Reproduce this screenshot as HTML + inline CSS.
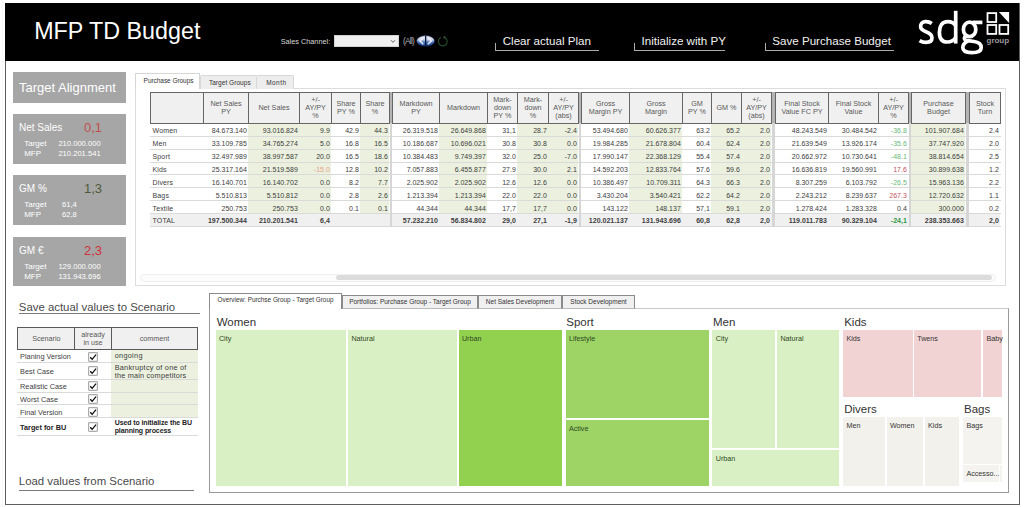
<!DOCTYPE html><html><head><meta charset="utf-8"><style>
*{box-sizing:border-box;margin:0;padding:0}
html,body{width:1024px;height:507px;overflow:hidden;background:#fff;font-family:"Liberation Sans",sans-serif;position:relative}
.a{position:absolute}
.t{white-space:nowrap}
</style></head><body>
<div class="a" style="left:2px;top:0px;width:1px;height:507px;background:#f7f7f7"></div>
<div class="a" style="left:5px;top:3px;width:1015px;height:502px;border:1px solid #5e5e5e;border-top:none"></div>
<div class="a" style="left:5px;top:3px;width:1014px;height:58px;background:#000"></div>
<div class="a t" style="left:34.20px;top:19.68px;font-size:23.3px;line-height:23.3px;color:#fff;">MFP TD Budget</div>
<div class="a t" style="left:280.70px;top:38.42px;font-size:7.3px;line-height:7.3px;color:#d8d8d8;letter-spacing:0px">Sales Channel:</div>
<div class="a" style="left:334px;top:35px;width:65px;height:12px;background:#efefef;border:1px solid #d0d0d0"></div>
<svg class="a" style="left:390px;top:39px" width="6" height="5" viewBox="0 0 6 5"><path d="M1 1.2 L3 3.4 L5 1.2" fill="none" stroke="#666" stroke-width="1"/></svg>
<div class="a t" style="left:403.00px;top:38.26px;font-size:8.2px;line-height:8.2px;color:#b0b0b0;letter-spacing:-0.7px">(All)</div>
<svg class="a" style="left:416px;top:35px" width="20" height="13" viewBox="0 0 20 13">
<defs><linearGradient id="bg1" x1="0" y1="0" x2="0" y2="1"><stop offset="0" stop-color="#f0eef4"/><stop offset="0.4" stop-color="#c8cfe2"/><stop offset="0.62" stop-color="#4a78c0"/><stop offset="1" stop-color="#1a3a80"/></linearGradient></defs>
<ellipse cx="9.6" cy="5.9" rx="9" ry="5.3" fill="url(#bg1)" stroke="#0d1f50" stroke-width="0.6"/>
<rect x="9" y="0.6" width="1.3" height="10.6" fill="#0a1840"/>
<path d="M7.3 2.6 L3.9 5.9 L7.3 9.2" fill="none" stroke="#f4f4fa" stroke-width="1.5" opacity="0.9"/>
<path d="M11.9 2.6 L15.3 5.9 L11.9 9.2" fill="none" stroke="#f4f4fa" stroke-width="1.5" opacity="0.9"/>
</svg>
<svg class="a" style="left:437px;top:35px" width="12" height="13" viewBox="0 0 12 13">
<path d="M7.6 2.5 A4.4 4.4 0 1 1 3.8 2.6" fill="none" stroke="#24502a" stroke-width="1.1"/>
<circle cx="7.4" cy="2.3" r="1" fill="#3a6a3a"/>
</svg>
<div class="a" style="left:495px;top:43px;width:104px;height:8px;border-left:1px solid #aaa;border-bottom:1px solid #aaa"></div>
<div class="a t" style="left:502.70px;top:34.78px;font-size:11.6px;line-height:11.6px;color:#f2f2f2;">Clear actual Plan</div>
<div class="a" style="left:634px;top:43px;width:91px;height:8px;border-left:1px solid #aaa;border-bottom:1px solid #aaa"></div>
<div class="a t" style="left:641.50px;top:34.78px;font-size:11.6px;line-height:11.6px;color:#f2f2f2;">Initialize with PY</div>
<div class="a" style="left:765px;top:43px;width:129px;height:8px;border-left:1px solid #aaa;border-bottom:1px solid #aaa"></div>
<div class="a t" style="left:772.30px;top:34.78px;font-size:11.6px;line-height:11.6px;color:#f2f2f2;">Save Purchase Budget</div>
<svg class="a" style="left:910px;top:5px" width="80" height="55" viewBox="910 5 80 55">
<g fill="none" stroke="#fff" stroke-width="3.7" stroke-linecap="butt">
<path d="M931.8 23.6 C929.5 21.9 926.5 21.6 925.2 21.7 C921.8 21.9 920.6 24.5 920.6 26.6 C920.6 29.6 923 30.7 926 31.8 C929.6 33.1 932 34.4 932 37.8 C932 41.2 929 42.4 926 42.4 C923.6 42.4 921.5 41.8 919.6 40.6"/>
<path d="M955.7 10.8 V43.6"/>
<path d="M955.7 25.8 C954 23 951.3 21.6 947.8 21.6 C942 21.6 939.4 26 939.4 32.2 C939.4 38.4 942 42 947.2 42 C951 42 953.8 40.4 955.7 37.4"/>
<ellipse cx="969.6" cy="29.4" rx="6.2" ry="7.3"/>
<path d="M972.6 22.4 H982.4"/>
<path d="M966.2 35.6 C963.8 37 963.6 39.6 966.6 40.4 L974 41.5 C979.6 42.3 981.2 44.4 981.2 47.4 C981.2 51.2 976.8 52.6 971.6 52.6 C966 52.6 962.8 51.2 962.8 47.6 C962.8 45 964.6 42.8 967.6 41.2"/>
</g></svg>
<svg class="a" style="left:986px;top:12px" width="24" height="24" viewBox="0 0 24 24">
<rect x="1.5" y="1.1" width="8.7" height="8.9" fill="none" stroke="#fff" stroke-width="1.8"/>
<path d="M12.9 0.1 L23.1 0.1 L23.1 10.9 Z" fill="#fff"/>
<rect x="1.5" y="13" width="8.7" height="8.9" fill="none" stroke="#fff" stroke-width="1.8"/>
<rect x="13.5" y="13" width="8.7" height="8.9" fill="none" stroke="#fff" stroke-width="1.8"/>
</svg>
<div class="a t" style="left:986.60px;top:37.03px;font-size:8px;line-height:8px;color:#9a9a9a;font-weight:bold;letter-spacing:-0.05px">group</div>
<div class="a" style="left:13px;top:72px;width:112.5px;height:31px;background:#a6a6a6"></div>
<div class="a t" style="left:19.00px;top:80.80px;font-size:13px;line-height:13px;color:#fff;">Target Alignment</div>
<div class="a" style="left:13px;top:114px;width:112.5px;height:50px;background:#a6a6a6"></div>
<div class="a t" style="left:19.00px;top:122.73px;font-size:10px;line-height:10px;color:#fff;">Net Sales</div>
<div class="a t" style="left:84.00px;top:121.00px;font-size:13px;line-height:13px;color:#c0504d;">0,1</div>
<div class="a t" style="left:24.20px;top:140.03px;font-size:8px;line-height:8px;color:#fff;">Target</div>
<div class="a t" style="left:58.40px;top:140.37px;font-size:7.6px;line-height:7.6px;color:#fff;">210.000.000</div>
<div class="a t" style="left:24.20px;top:150.03px;font-size:8px;line-height:8px;color:#fff;">MFP</div>
<div class="a t" style="left:58.40px;top:150.37px;font-size:7.6px;line-height:7.6px;color:#fff;">210.201.541</div>
<div class="a" style="left:13px;top:175px;width:112.5px;height:50px;background:#a6a6a6"></div>
<div class="a t" style="left:19.00px;top:183.73px;font-size:10px;line-height:10px;color:#fff;">GM %</div>
<div class="a t" style="left:84.00px;top:182.00px;font-size:13px;line-height:13px;color:#4f5a3c;">1,3</div>
<div class="a t" style="left:24.20px;top:201.03px;font-size:8px;line-height:8px;color:#fff;">Target</div>
<div class="a t" style="left:62.00px;top:201.37px;font-size:7.6px;line-height:7.6px;color:#fff;">61,4</div>
<div class="a t" style="left:24.20px;top:211.03px;font-size:8px;line-height:8px;color:#fff;">MFP</div>
<div class="a t" style="left:62.00px;top:211.37px;font-size:7.6px;line-height:7.6px;color:#fff;">62,8</div>
<div class="a" style="left:13px;top:237px;width:112.5px;height:49px;background:#a6a6a6"></div>
<div class="a t" style="left:19.00px;top:245.73px;font-size:10px;line-height:10px;color:#fff;">GM &euro;</div>
<div class="a t" style="left:84.00px;top:244.00px;font-size:13px;line-height:13px;color:#d0303a;">2,3</div>
<div class="a t" style="left:24.20px;top:263.03px;font-size:8px;line-height:8px;color:#fff;">Target</div>
<div class="a t" style="left:58.40px;top:263.37px;font-size:7.6px;line-height:7.6px;color:#fff;">129.000.000</div>
<div class="a t" style="left:24.20px;top:273.03px;font-size:8px;line-height:8px;color:#fff;">MFP</div>
<div class="a t" style="left:58.40px;top:273.37px;font-size:7.6px;line-height:7.6px;color:#fff;">131.943.696</div>
<div class="a" style="left:135px;top:88px;width:871px;height:198px;border:1px solid #dcdcdc"></div>
<div class="a" style="left:200px;top:75px;width:57px;height:14px;background:#ededed;border:1px solid #d8d8d8;border-bottom:none;border-radius:2px 2px 0 0"></div>
<div class="a" style="left:257px;top:75px;width:37px;height:14px;background:#ededed;border:1px solid #d8d8d8;border-bottom:none;border-left:none;border-radius:0 2px 0 0"></div>
<div class="a" style="left:135px;top:73px;width:65px;height:16px;background:#fff;border:1px solid #d6d6d6;border-bottom:none"></div>
<div class="a t" style="left:143.60px;top:78.30px;font-size:6.5px;line-height:6.5px;color:#333;letter-spacing:-0.05px">Purchase Groups</div>
<div class="a t" style="left:208.90px;top:79.90px;font-size:6.5px;line-height:6.5px;color:#333;letter-spacing:0.05px">Target Groups</div>
<div class="a t" style="left:266.20px;top:79.90px;font-size:6.5px;line-height:6.5px;color:#333;letter-spacing:0.45px">Month</div>
<div class="a" style="left:140px;top:273.5px;width:856px;height:8.0px;border:1px solid #f0f0f0;border-radius:4px;background:#fcfcfc"></div>
<div class="a" style="left:336px;top:275px;width:656px;height:5px;background:#dcdcdc;border-radius:2.5px"></div>
<div class="a" style="left:248px;top:123px;width:51px;height:90px;background:#ebf1de"></div>
<div class="a" style="left:299px;top:123px;width:32px;height:90px;background:#ebf1de"></div>
<div class="a" style="left:360px;top:123px;width:29px;height:90px;background:#ebf1de"></div>
<div class="a" style="left:439px;top:123px;width:48px;height:90px;background:#ebf1de"></div>
<div class="a" style="left:517px;top:123px;width:31px;height:90px;background:#ebf1de"></div>
<div class="a" style="left:548px;top:123px;width:30px;height:90px;background:#ebf1de"></div>
<div class="a" style="left:629px;top:123px;width:53px;height:90px;background:#ebf1de"></div>
<div class="a" style="left:711px;top:123px;width:30px;height:90px;background:#ebf1de"></div>
<div class="a" style="left:741px;top:123px;width:30px;height:90px;background:#ebf1de"></div>
<div class="a" style="left:911px;top:123px;width:54px;height:90px;background:#ebf1de"></div>
<div class="a" style="left:150px;top:213px;width:850px;height:13.5px;background:#f0f0f0"></div>
<div class="a" style="left:389px;top:92px;width:4px;height:31px;background:#b4b4b4"></div>
<div class="a" style="left:390px;top:123px;width:2px;height:103.5px;background:#d6d6d6"></div>
<div class="a" style="left:578px;top:92px;width:4px;height:31px;background:#b4b4b4"></div>
<div class="a" style="left:579px;top:123px;width:2px;height:103.5px;background:#d6d6d6"></div>
<div class="a" style="left:771px;top:92px;width:5px;height:31px;background:#b4b4b4"></div>
<div class="a" style="left:772px;top:123px;width:3px;height:103.5px;background:#d6d6d6"></div>
<div class="a" style="left:908px;top:92px;width:4px;height:31px;background:#b4b4b4"></div>
<div class="a" style="left:909px;top:123px;width:2px;height:103.5px;background:#d6d6d6"></div>
<div class="a" style="left:965px;top:92px;width:5px;height:31px;background:#b4b4b4"></div>
<div class="a" style="left:966px;top:123px;width:3px;height:103.5px;background:#d6d6d6"></div>
<div class="a" style="left:150px;top:135.5px;width:240px;height:1.0px;background:#dadada"></div>
<div class="a" style="left:392px;top:135.5px;width:187px;height:1.0px;background:#dadada"></div>
<div class="a" style="left:581px;top:135.5px;width:191px;height:1.0px;background:#dadada"></div>
<div class="a" style="left:775px;top:135.5px;width:134px;height:1.0px;background:#dadada"></div>
<div class="a" style="left:911px;top:135.5px;width:55px;height:1.0px;background:#dadada"></div>
<div class="a" style="left:969px;top:135.5px;width:32px;height:1.0px;background:#dadada"></div>
<div class="a" style="left:150px;top:148.5px;width:240px;height:1.0px;background:#dadada"></div>
<div class="a" style="left:392px;top:148.5px;width:187px;height:1.0px;background:#dadada"></div>
<div class="a" style="left:581px;top:148.5px;width:191px;height:1.0px;background:#dadada"></div>
<div class="a" style="left:775px;top:148.5px;width:134px;height:1.0px;background:#dadada"></div>
<div class="a" style="left:911px;top:148.5px;width:55px;height:1.0px;background:#dadada"></div>
<div class="a" style="left:969px;top:148.5px;width:32px;height:1.0px;background:#dadada"></div>
<div class="a" style="left:150px;top:161.5px;width:240px;height:1.0px;background:#dadada"></div>
<div class="a" style="left:392px;top:161.5px;width:187px;height:1.0px;background:#dadada"></div>
<div class="a" style="left:581px;top:161.5px;width:191px;height:1.0px;background:#dadada"></div>
<div class="a" style="left:775px;top:161.5px;width:134px;height:1.0px;background:#dadada"></div>
<div class="a" style="left:911px;top:161.5px;width:55px;height:1.0px;background:#dadada"></div>
<div class="a" style="left:969px;top:161.5px;width:32px;height:1.0px;background:#dadada"></div>
<div class="a" style="left:150px;top:174.0px;width:240px;height:1.0px;background:#dadada"></div>
<div class="a" style="left:392px;top:174.0px;width:187px;height:1.0px;background:#dadada"></div>
<div class="a" style="left:581px;top:174.0px;width:191px;height:1.0px;background:#dadada"></div>
<div class="a" style="left:775px;top:174.0px;width:134px;height:1.0px;background:#dadada"></div>
<div class="a" style="left:911px;top:174.0px;width:55px;height:1.0px;background:#dadada"></div>
<div class="a" style="left:969px;top:174.0px;width:32px;height:1.0px;background:#dadada"></div>
<div class="a" style="left:150px;top:187.0px;width:240px;height:1.0px;background:#dadada"></div>
<div class="a" style="left:392px;top:187.0px;width:187px;height:1.0px;background:#dadada"></div>
<div class="a" style="left:581px;top:187.0px;width:191px;height:1.0px;background:#dadada"></div>
<div class="a" style="left:775px;top:187.0px;width:134px;height:1.0px;background:#dadada"></div>
<div class="a" style="left:911px;top:187.0px;width:55px;height:1.0px;background:#dadada"></div>
<div class="a" style="left:969px;top:187.0px;width:32px;height:1.0px;background:#dadada"></div>
<div class="a" style="left:150px;top:200.0px;width:240px;height:1.0px;background:#dadada"></div>
<div class="a" style="left:392px;top:200.0px;width:187px;height:1.0px;background:#dadada"></div>
<div class="a" style="left:581px;top:200.0px;width:191px;height:1.0px;background:#dadada"></div>
<div class="a" style="left:775px;top:200.0px;width:134px;height:1.0px;background:#dadada"></div>
<div class="a" style="left:911px;top:200.0px;width:55px;height:1.0px;background:#dadada"></div>
<div class="a" style="left:969px;top:200.0px;width:32px;height:1.0px;background:#dadada"></div>
<div class="a" style="left:150px;top:212.5px;width:240px;height:1.0px;background:#dadada"></div>
<div class="a" style="left:392px;top:212.5px;width:187px;height:1.0px;background:#dadada"></div>
<div class="a" style="left:581px;top:212.5px;width:191px;height:1.0px;background:#dadada"></div>
<div class="a" style="left:775px;top:212.5px;width:134px;height:1.0px;background:#dadada"></div>
<div class="a" style="left:911px;top:212.5px;width:55px;height:1.0px;background:#dadada"></div>
<div class="a" style="left:969px;top:212.5px;width:32px;height:1.0px;background:#dadada"></div>
<div class="a" style="left:150px;top:226.0px;width:240px;height:1.0px;background:#dadada"></div>
<div class="a" style="left:392px;top:226.0px;width:187px;height:1.0px;background:#dadada"></div>
<div class="a" style="left:581px;top:226.0px;width:191px;height:1.0px;background:#dadada"></div>
<div class="a" style="left:775px;top:226.0px;width:134px;height:1.0px;background:#dadada"></div>
<div class="a" style="left:911px;top:226.0px;width:55px;height:1.0px;background:#dadada"></div>
<div class="a" style="left:969px;top:226.0px;width:32px;height:1.0px;background:#dadada"></div>
<div class="a" style="left:150px;top:92px;width:240px;height:32px;background:#f0f0f0;border:1px solid #666"></div>
<div class="a" style="left:203px;top:92px;width:1px;height:32px;background:#666"></div>
<div class="a" style="left:248px;top:92px;width:1px;height:32px;background:#666"></div>
<div class="a" style="left:299px;top:92px;width:1px;height:32px;background:#666"></div>
<div class="a" style="left:331px;top:92px;width:1px;height:32px;background:#666"></div>
<div class="a" style="left:360px;top:92px;width:1px;height:32px;background:#666"></div>
<div class="a" style="left:203px;top:99.80px;width:46px;text-align:center;font-size:7.2px;line-height:8.2px;color:#595959">Net Sales<br>PY</div>
<div class="a" style="left:248px;top:103.90px;width:52px;text-align:center;font-size:7.2px;line-height:8.2px;color:#595959">Net Sales</div>
<div class="a" style="left:299px;top:95.70px;width:33px;text-align:center;font-size:7.2px;line-height:8.2px;color:#595959">+/-<br>AY/PY<br>%</div>
<div class="a" style="left:331px;top:99.80px;width:30px;text-align:center;font-size:7.2px;line-height:8.2px;color:#595959">Share<br>PY %</div>
<div class="a" style="left:360px;top:99.80px;width:30px;text-align:center;font-size:7.2px;line-height:8.2px;color:#595959">Share<br>%</div>
<div class="a" style="left:392px;top:92px;width:187px;height:32px;background:#f0f0f0;border:1px solid #666"></div>
<div class="a" style="left:439px;top:92px;width:1px;height:32px;background:#666"></div>
<div class="a" style="left:487px;top:92px;width:1px;height:32px;background:#666"></div>
<div class="a" style="left:517px;top:92px;width:1px;height:32px;background:#666"></div>
<div class="a" style="left:548px;top:92px;width:1px;height:32px;background:#666"></div>
<div class="a" style="left:392px;top:99.80px;width:48px;text-align:center;font-size:7.2px;line-height:8.2px;color:#595959">Markdown<br>PY</div>
<div class="a" style="left:439px;top:103.90px;width:49px;text-align:center;font-size:7.2px;line-height:8.2px;color:#595959">Markdown</div>
<div class="a" style="left:487px;top:95.70px;width:31px;text-align:center;font-size:7.2px;line-height:8.2px;color:#595959">Mark-<br>down<br>PY %</div>
<div class="a" style="left:517px;top:95.70px;width:32px;text-align:center;font-size:7.2px;line-height:8.2px;color:#595959">Mark-<br>down<br>%</div>
<div class="a" style="left:548px;top:95.70px;width:31px;text-align:center;font-size:7.2px;line-height:8.2px;color:#595959">+/-<br>AY/PY<br>(abs)</div>
<div class="a" style="left:581px;top:92px;width:191px;height:32px;background:#f0f0f0;border:1px solid #666"></div>
<div class="a" style="left:629px;top:92px;width:1px;height:32px;background:#666"></div>
<div class="a" style="left:682px;top:92px;width:1px;height:32px;background:#666"></div>
<div class="a" style="left:711px;top:92px;width:1px;height:32px;background:#666"></div>
<div class="a" style="left:741px;top:92px;width:1px;height:32px;background:#666"></div>
<div class="a" style="left:581px;top:99.80px;width:49px;text-align:center;font-size:7.2px;line-height:8.2px;color:#595959">Gross<br>Margin PY</div>
<div class="a" style="left:629px;top:99.80px;width:54px;text-align:center;font-size:7.2px;line-height:8.2px;color:#595959">Gross<br>Margin</div>
<div class="a" style="left:682px;top:99.80px;width:30px;text-align:center;font-size:7.2px;line-height:8.2px;color:#595959">GM<br>PY %</div>
<div class="a" style="left:711px;top:103.90px;width:31px;text-align:center;font-size:7.2px;line-height:8.2px;color:#595959">GM %</div>
<div class="a" style="left:741px;top:95.70px;width:31px;text-align:center;font-size:7.2px;line-height:8.2px;color:#595959">+/-<br>AY/PY<br>(abs)</div>
<div class="a" style="left:775px;top:92px;width:134px;height:32px;background:#f0f0f0;border:1px solid #666"></div>
<div class="a" style="left:828px;top:92px;width:1px;height:32px;background:#666"></div>
<div class="a" style="left:878px;top:92px;width:1px;height:32px;background:#666"></div>
<div class="a" style="left:775px;top:99.80px;width:54px;text-align:center;font-size:7.2px;line-height:8.2px;color:#595959">Final Stock<br>Value FC PY</div>
<div class="a" style="left:828px;top:99.80px;width:51px;text-align:center;font-size:7.2px;line-height:8.2px;color:#595959">Final Stock<br>Value</div>
<div class="a" style="left:878px;top:95.70px;width:31px;text-align:center;font-size:7.2px;line-height:8.2px;color:#595959">+/-<br>AY/PY<br>%</div>
<div class="a" style="left:911px;top:92px;width:55px;height:32px;background:#f0f0f0;border:1px solid #666"></div>
<div class="a" style="left:911px;top:99.80px;width:55px;text-align:center;font-size:7.2px;line-height:8.2px;color:#595959">Purchase<br>Budget</div>
<div class="a" style="left:969px;top:92px;width:32px;height:32px;background:#f0f0f0;border:1px solid #666"></div>
<div class="a" style="left:969px;top:99.80px;width:32px;text-align:center;font-size:7.2px;line-height:8.2px;color:#595959">Stock<br>Turn</div>
<div class="a t" style="left:152.50px;top:127.47px;font-size:7px;line-height:7px;color:#404040;letter-spacing:0.15px">Women</div>
<div class="a t" style="left:-53.20px;width:300px;text-align:right;top:127.47px;font-size:7px;line-height:7px;color:#404040;">84.673.140</div>
<div class="a t" style="left:-2.20px;width:300px;text-align:right;top:127.47px;font-size:7px;line-height:7px;color:#404040;">93.016.824</div>
<div class="a t" style="left:29.80px;width:300px;text-align:right;top:127.47px;font-size:7px;line-height:7px;color:#404040;">9.9</div>
<div class="a t" style="left:58.80px;width:300px;text-align:right;top:127.47px;font-size:7px;line-height:7px;color:#404040;">42.9</div>
<div class="a t" style="left:87.80px;width:300px;text-align:right;top:127.47px;font-size:7px;line-height:7px;color:#404040;">44.3</div>
<div class="a t" style="left:137.80px;width:300px;text-align:right;top:127.47px;font-size:7px;line-height:7px;color:#404040;">26.319.518</div>
<div class="a t" style="left:185.80px;width:300px;text-align:right;top:127.47px;font-size:7px;line-height:7px;color:#404040;">26.649.868</div>
<div class="a t" style="left:215.80px;width:300px;text-align:right;top:127.47px;font-size:7px;line-height:7px;color:#404040;">31,1</div>
<div class="a t" style="left:246.80px;width:300px;text-align:right;top:127.47px;font-size:7px;line-height:7px;color:#404040;">28.7</div>
<div class="a t" style="left:276.80px;width:300px;text-align:right;top:127.47px;font-size:7px;line-height:7px;color:#404040;">-2.4</div>
<div class="a t" style="left:327.80px;width:300px;text-align:right;top:127.47px;font-size:7px;line-height:7px;color:#404040;">53.494.680</div>
<div class="a t" style="left:380.80px;width:300px;text-align:right;top:127.47px;font-size:7px;line-height:7px;color:#404040;">60.626.377</div>
<div class="a t" style="left:409.80px;width:300px;text-align:right;top:127.47px;font-size:7px;line-height:7px;color:#404040;">63.2</div>
<div class="a t" style="left:439.80px;width:300px;text-align:right;top:127.47px;font-size:7px;line-height:7px;color:#404040;">65.2</div>
<div class="a t" style="left:469.80px;width:300px;text-align:right;top:127.47px;font-size:7px;line-height:7px;color:#404040;">2.0</div>
<div class="a t" style="left:526.80px;width:300px;text-align:right;top:127.47px;font-size:7px;line-height:7px;color:#404040;">48.243.549</div>
<div class="a t" style="left:576.80px;width:300px;text-align:right;top:127.47px;font-size:7px;line-height:7px;color:#404040;">30.484.542</div>
<div class="a t" style="left:606.80px;width:300px;text-align:right;top:127.47px;font-size:7px;line-height:7px;color:#6cb87c;">-36.8</div>
<div class="a t" style="left:663.80px;width:300px;text-align:right;top:127.47px;font-size:7px;line-height:7px;color:#404040;">101.907.684</div>
<div class="a t" style="left:698.80px;width:300px;text-align:right;top:127.47px;font-size:7px;line-height:7px;color:#404040;">2.4</div>
<div class="a t" style="left:152.50px;top:140.47px;font-size:7px;line-height:7px;color:#404040;letter-spacing:0.15px">Men</div>
<div class="a t" style="left:-53.20px;width:300px;text-align:right;top:140.47px;font-size:7px;line-height:7px;color:#404040;">33.109.785</div>
<div class="a t" style="left:-2.20px;width:300px;text-align:right;top:140.47px;font-size:7px;line-height:7px;color:#404040;">34.765.274</div>
<div class="a t" style="left:29.80px;width:300px;text-align:right;top:140.47px;font-size:7px;line-height:7px;color:#404040;">5.0</div>
<div class="a t" style="left:58.80px;width:300px;text-align:right;top:140.47px;font-size:7px;line-height:7px;color:#404040;">16.8</div>
<div class="a t" style="left:87.80px;width:300px;text-align:right;top:140.47px;font-size:7px;line-height:7px;color:#404040;">16.5</div>
<div class="a t" style="left:137.80px;width:300px;text-align:right;top:140.47px;font-size:7px;line-height:7px;color:#404040;">10.186.687</div>
<div class="a t" style="left:185.80px;width:300px;text-align:right;top:140.47px;font-size:7px;line-height:7px;color:#404040;">10.696.021</div>
<div class="a t" style="left:215.80px;width:300px;text-align:right;top:140.47px;font-size:7px;line-height:7px;color:#404040;">30.8</div>
<div class="a t" style="left:246.80px;width:300px;text-align:right;top:140.47px;font-size:7px;line-height:7px;color:#404040;">30.8</div>
<div class="a t" style="left:276.80px;width:300px;text-align:right;top:140.47px;font-size:7px;line-height:7px;color:#404040;">0.0</div>
<div class="a t" style="left:327.80px;width:300px;text-align:right;top:140.47px;font-size:7px;line-height:7px;color:#404040;">19.984.285</div>
<div class="a t" style="left:380.80px;width:300px;text-align:right;top:140.47px;font-size:7px;line-height:7px;color:#404040;">21.678.804</div>
<div class="a t" style="left:409.80px;width:300px;text-align:right;top:140.47px;font-size:7px;line-height:7px;color:#404040;">60.4</div>
<div class="a t" style="left:439.80px;width:300px;text-align:right;top:140.47px;font-size:7px;line-height:7px;color:#404040;">62.4</div>
<div class="a t" style="left:469.80px;width:300px;text-align:right;top:140.47px;font-size:7px;line-height:7px;color:#404040;">2.0</div>
<div class="a t" style="left:526.80px;width:300px;text-align:right;top:140.47px;font-size:7px;line-height:7px;color:#404040;">21.639.549</div>
<div class="a t" style="left:576.80px;width:300px;text-align:right;top:140.47px;font-size:7px;line-height:7px;color:#404040;">13.926.174</div>
<div class="a t" style="left:606.80px;width:300px;text-align:right;top:140.47px;font-size:7px;line-height:7px;color:#6cb87c;">-35.6</div>
<div class="a t" style="left:663.80px;width:300px;text-align:right;top:140.47px;font-size:7px;line-height:7px;color:#404040;">37.747.920</div>
<div class="a t" style="left:698.80px;width:300px;text-align:right;top:140.47px;font-size:7px;line-height:7px;color:#404040;">2.0</div>
<div class="a t" style="left:152.50px;top:153.47px;font-size:7px;line-height:7px;color:#404040;letter-spacing:0.15px">Sport</div>
<div class="a t" style="left:-53.20px;width:300px;text-align:right;top:153.47px;font-size:7px;line-height:7px;color:#404040;">32.497.989</div>
<div class="a t" style="left:-2.20px;width:300px;text-align:right;top:153.47px;font-size:7px;line-height:7px;color:#404040;">38.997.587</div>
<div class="a t" style="left:29.80px;width:300px;text-align:right;top:153.47px;font-size:7px;line-height:7px;color:#404040;">20.0</div>
<div class="a t" style="left:58.80px;width:300px;text-align:right;top:153.47px;font-size:7px;line-height:7px;color:#404040;">16.5</div>
<div class="a t" style="left:87.80px;width:300px;text-align:right;top:153.47px;font-size:7px;line-height:7px;color:#404040;">18.6</div>
<div class="a t" style="left:137.80px;width:300px;text-align:right;top:153.47px;font-size:7px;line-height:7px;color:#404040;">10.384.483</div>
<div class="a t" style="left:185.80px;width:300px;text-align:right;top:153.47px;font-size:7px;line-height:7px;color:#404040;">9.749.397</div>
<div class="a t" style="left:215.80px;width:300px;text-align:right;top:153.47px;font-size:7px;line-height:7px;color:#404040;">32.0</div>
<div class="a t" style="left:246.80px;width:300px;text-align:right;top:153.47px;font-size:7px;line-height:7px;color:#404040;">25.0</div>
<div class="a t" style="left:276.80px;width:300px;text-align:right;top:153.47px;font-size:7px;line-height:7px;color:#404040;">-7.0</div>
<div class="a t" style="left:327.80px;width:300px;text-align:right;top:153.47px;font-size:7px;line-height:7px;color:#404040;">17.990.147</div>
<div class="a t" style="left:380.80px;width:300px;text-align:right;top:153.47px;font-size:7px;line-height:7px;color:#404040;">22.368.129</div>
<div class="a t" style="left:409.80px;width:300px;text-align:right;top:153.47px;font-size:7px;line-height:7px;color:#404040;">55.4</div>
<div class="a t" style="left:439.80px;width:300px;text-align:right;top:153.47px;font-size:7px;line-height:7px;color:#404040;">57.4</div>
<div class="a t" style="left:469.80px;width:300px;text-align:right;top:153.47px;font-size:7px;line-height:7px;color:#404040;">2.0</div>
<div class="a t" style="left:526.80px;width:300px;text-align:right;top:153.47px;font-size:7px;line-height:7px;color:#404040;">20.662.972</div>
<div class="a t" style="left:576.80px;width:300px;text-align:right;top:153.47px;font-size:7px;line-height:7px;color:#404040;">10.730.641</div>
<div class="a t" style="left:606.80px;width:300px;text-align:right;top:153.47px;font-size:7px;line-height:7px;color:#6cb87c;">-48.1</div>
<div class="a t" style="left:663.80px;width:300px;text-align:right;top:153.47px;font-size:7px;line-height:7px;color:#404040;">38.814.654</div>
<div class="a t" style="left:698.80px;width:300px;text-align:right;top:153.47px;font-size:7px;line-height:7px;color:#404040;">2.5</div>
<div class="a t" style="left:152.50px;top:166.47px;font-size:7px;line-height:7px;color:#404040;letter-spacing:0.15px">Kids</div>
<div class="a t" style="left:-53.20px;width:300px;text-align:right;top:166.47px;font-size:7px;line-height:7px;color:#404040;">25.317.164</div>
<div class="a t" style="left:-2.20px;width:300px;text-align:right;top:166.47px;font-size:7px;line-height:7px;color:#404040;">21.519.589</div>
<div class="a t" style="left:29.80px;width:300px;text-align:right;top:166.47px;font-size:7px;line-height:7px;color:#e8a08a;">-15.0</div>
<div class="a t" style="left:58.80px;width:300px;text-align:right;top:166.47px;font-size:7px;line-height:7px;color:#404040;">12.8</div>
<div class="a t" style="left:87.80px;width:300px;text-align:right;top:166.47px;font-size:7px;line-height:7px;color:#404040;">10.2</div>
<div class="a t" style="left:137.80px;width:300px;text-align:right;top:166.47px;font-size:7px;line-height:7px;color:#404040;">7.057.883</div>
<div class="a t" style="left:185.80px;width:300px;text-align:right;top:166.47px;font-size:7px;line-height:7px;color:#404040;">6.455.877</div>
<div class="a t" style="left:215.80px;width:300px;text-align:right;top:166.47px;font-size:7px;line-height:7px;color:#404040;">27.9</div>
<div class="a t" style="left:246.80px;width:300px;text-align:right;top:166.47px;font-size:7px;line-height:7px;color:#404040;">30.0</div>
<div class="a t" style="left:276.80px;width:300px;text-align:right;top:166.47px;font-size:7px;line-height:7px;color:#404040;">2.1</div>
<div class="a t" style="left:327.80px;width:300px;text-align:right;top:166.47px;font-size:7px;line-height:7px;color:#404040;">14.592.203</div>
<div class="a t" style="left:380.80px;width:300px;text-align:right;top:166.47px;font-size:7px;line-height:7px;color:#404040;">12.833.764</div>
<div class="a t" style="left:409.80px;width:300px;text-align:right;top:166.47px;font-size:7px;line-height:7px;color:#404040;">57.6</div>
<div class="a t" style="left:439.80px;width:300px;text-align:right;top:166.47px;font-size:7px;line-height:7px;color:#404040;">59.6</div>
<div class="a t" style="left:469.80px;width:300px;text-align:right;top:166.47px;font-size:7px;line-height:7px;color:#404040;">2.0</div>
<div class="a t" style="left:526.80px;width:300px;text-align:right;top:166.47px;font-size:7px;line-height:7px;color:#404040;">16.636.819</div>
<div class="a t" style="left:576.80px;width:300px;text-align:right;top:166.47px;font-size:7px;line-height:7px;color:#404040;">19.560.991</div>
<div class="a t" style="left:606.80px;width:300px;text-align:right;top:166.47px;font-size:7px;line-height:7px;color:#c4505c;">17.6</div>
<div class="a t" style="left:663.80px;width:300px;text-align:right;top:166.47px;font-size:7px;line-height:7px;color:#404040;">30.899.638</div>
<div class="a t" style="left:698.80px;width:300px;text-align:right;top:166.47px;font-size:7px;line-height:7px;color:#404040;">1.2</div>
<div class="a t" style="left:152.50px;top:178.97px;font-size:7px;line-height:7px;color:#404040;letter-spacing:0.15px">Divers</div>
<div class="a t" style="left:-53.20px;width:300px;text-align:right;top:178.97px;font-size:7px;line-height:7px;color:#404040;">16.140.701</div>
<div class="a t" style="left:-2.20px;width:300px;text-align:right;top:178.97px;font-size:7px;line-height:7px;color:#404040;">16.140.702</div>
<div class="a t" style="left:29.80px;width:300px;text-align:right;top:178.97px;font-size:7px;line-height:7px;color:#404040;">0.0</div>
<div class="a t" style="left:58.80px;width:300px;text-align:right;top:178.97px;font-size:7px;line-height:7px;color:#404040;">8.2</div>
<div class="a t" style="left:87.80px;width:300px;text-align:right;top:178.97px;font-size:7px;line-height:7px;color:#404040;">7.7</div>
<div class="a t" style="left:137.80px;width:300px;text-align:right;top:178.97px;font-size:7px;line-height:7px;color:#404040;">2.025.902</div>
<div class="a t" style="left:185.80px;width:300px;text-align:right;top:178.97px;font-size:7px;line-height:7px;color:#404040;">2.025.902</div>
<div class="a t" style="left:215.80px;width:300px;text-align:right;top:178.97px;font-size:7px;line-height:7px;color:#404040;">12.6</div>
<div class="a t" style="left:246.80px;width:300px;text-align:right;top:178.97px;font-size:7px;line-height:7px;color:#404040;">12.6</div>
<div class="a t" style="left:276.80px;width:300px;text-align:right;top:178.97px;font-size:7px;line-height:7px;color:#404040;">0.0</div>
<div class="a t" style="left:327.80px;width:300px;text-align:right;top:178.97px;font-size:7px;line-height:7px;color:#404040;">10.386.497</div>
<div class="a t" style="left:380.80px;width:300px;text-align:right;top:178.97px;font-size:7px;line-height:7px;color:#404040;">10.709.311</div>
<div class="a t" style="left:409.80px;width:300px;text-align:right;top:178.97px;font-size:7px;line-height:7px;color:#404040;">64.3</div>
<div class="a t" style="left:439.80px;width:300px;text-align:right;top:178.97px;font-size:7px;line-height:7px;color:#404040;">66.3</div>
<div class="a t" style="left:469.80px;width:300px;text-align:right;top:178.97px;font-size:7px;line-height:7px;color:#404040;">2.0</div>
<div class="a t" style="left:526.80px;width:300px;text-align:right;top:178.97px;font-size:7px;line-height:7px;color:#404040;">8.307.259</div>
<div class="a t" style="left:576.80px;width:300px;text-align:right;top:178.97px;font-size:7px;line-height:7px;color:#404040;">6.103.792</div>
<div class="a t" style="left:606.80px;width:300px;text-align:right;top:178.97px;font-size:7px;line-height:7px;color:#6cb87c;">-26.5</div>
<div class="a t" style="left:663.80px;width:300px;text-align:right;top:178.97px;font-size:7px;line-height:7px;color:#404040;">15.963.136</div>
<div class="a t" style="left:698.80px;width:300px;text-align:right;top:178.97px;font-size:7px;line-height:7px;color:#404040;">2.2</div>
<div class="a t" style="left:152.50px;top:191.97px;font-size:7px;line-height:7px;color:#404040;letter-spacing:0.15px">Bags</div>
<div class="a t" style="left:-53.20px;width:300px;text-align:right;top:191.97px;font-size:7px;line-height:7px;color:#404040;">5.510.813</div>
<div class="a t" style="left:-2.20px;width:300px;text-align:right;top:191.97px;font-size:7px;line-height:7px;color:#404040;">5.510.812</div>
<div class="a t" style="left:29.80px;width:300px;text-align:right;top:191.97px;font-size:7px;line-height:7px;color:#404040;">0.0</div>
<div class="a t" style="left:58.80px;width:300px;text-align:right;top:191.97px;font-size:7px;line-height:7px;color:#404040;">2.8</div>
<div class="a t" style="left:87.80px;width:300px;text-align:right;top:191.97px;font-size:7px;line-height:7px;color:#404040;">2.6</div>
<div class="a t" style="left:137.80px;width:300px;text-align:right;top:191.97px;font-size:7px;line-height:7px;color:#404040;">1.213.394</div>
<div class="a t" style="left:185.80px;width:300px;text-align:right;top:191.97px;font-size:7px;line-height:7px;color:#404040;">1.213.394</div>
<div class="a t" style="left:215.80px;width:300px;text-align:right;top:191.97px;font-size:7px;line-height:7px;color:#404040;">22.0</div>
<div class="a t" style="left:246.80px;width:300px;text-align:right;top:191.97px;font-size:7px;line-height:7px;color:#404040;">22.0</div>
<div class="a t" style="left:276.80px;width:300px;text-align:right;top:191.97px;font-size:7px;line-height:7px;color:#404040;">0.0</div>
<div class="a t" style="left:327.80px;width:300px;text-align:right;top:191.97px;font-size:7px;line-height:7px;color:#404040;">3.430.204</div>
<div class="a t" style="left:380.80px;width:300px;text-align:right;top:191.97px;font-size:7px;line-height:7px;color:#404040;">3.540.421</div>
<div class="a t" style="left:409.80px;width:300px;text-align:right;top:191.97px;font-size:7px;line-height:7px;color:#404040;">62.2</div>
<div class="a t" style="left:439.80px;width:300px;text-align:right;top:191.97px;font-size:7px;line-height:7px;color:#404040;">64.2</div>
<div class="a t" style="left:469.80px;width:300px;text-align:right;top:191.97px;font-size:7px;line-height:7px;color:#404040;">2.0</div>
<div class="a t" style="left:526.80px;width:300px;text-align:right;top:191.97px;font-size:7px;line-height:7px;color:#404040;">2.243.212</div>
<div class="a t" style="left:576.80px;width:300px;text-align:right;top:191.97px;font-size:7px;line-height:7px;color:#404040;">8.239.637</div>
<div class="a t" style="left:606.80px;width:300px;text-align:right;top:191.97px;font-size:7px;line-height:7px;color:#c4505c;">267.3</div>
<div class="a t" style="left:663.80px;width:300px;text-align:right;top:191.97px;font-size:7px;line-height:7px;color:#404040;">12.720.632</div>
<div class="a t" style="left:698.80px;width:300px;text-align:right;top:191.97px;font-size:7px;line-height:7px;color:#404040;">1.1</div>
<div class="a t" style="left:152.50px;top:204.97px;font-size:7px;line-height:7px;color:#404040;letter-spacing:0.15px">Textile</div>
<div class="a t" style="left:-53.20px;width:300px;text-align:right;top:204.97px;font-size:7px;line-height:7px;color:#404040;">250.753</div>
<div class="a t" style="left:-2.20px;width:300px;text-align:right;top:204.97px;font-size:7px;line-height:7px;color:#404040;">250.753</div>
<div class="a t" style="left:29.80px;width:300px;text-align:right;top:204.97px;font-size:7px;line-height:7px;color:#404040;">0.0</div>
<div class="a t" style="left:58.80px;width:300px;text-align:right;top:204.97px;font-size:7px;line-height:7px;color:#404040;">0.1</div>
<div class="a t" style="left:87.80px;width:300px;text-align:right;top:204.97px;font-size:7px;line-height:7px;color:#404040;">0.1</div>
<div class="a t" style="left:137.80px;width:300px;text-align:right;top:204.97px;font-size:7px;line-height:7px;color:#404040;">44.344</div>
<div class="a t" style="left:185.80px;width:300px;text-align:right;top:204.97px;font-size:7px;line-height:7px;color:#404040;">44.344</div>
<div class="a t" style="left:215.80px;width:300px;text-align:right;top:204.97px;font-size:7px;line-height:7px;color:#404040;">17,7</div>
<div class="a t" style="left:246.80px;width:300px;text-align:right;top:204.97px;font-size:7px;line-height:7px;color:#404040;">17,7</div>
<div class="a t" style="left:276.80px;width:300px;text-align:right;top:204.97px;font-size:7px;line-height:7px;color:#404040;">0.0</div>
<div class="a t" style="left:327.80px;width:300px;text-align:right;top:204.97px;font-size:7px;line-height:7px;color:#404040;">143.122</div>
<div class="a t" style="left:380.80px;width:300px;text-align:right;top:204.97px;font-size:7px;line-height:7px;color:#404040;">148.137</div>
<div class="a t" style="left:409.80px;width:300px;text-align:right;top:204.97px;font-size:7px;line-height:7px;color:#404040;">57,1</div>
<div class="a t" style="left:439.80px;width:300px;text-align:right;top:204.97px;font-size:7px;line-height:7px;color:#404040;">59.1</div>
<div class="a t" style="left:469.80px;width:300px;text-align:right;top:204.97px;font-size:7px;line-height:7px;color:#404040;">2.0</div>
<div class="a t" style="left:526.80px;width:300px;text-align:right;top:204.97px;font-size:7px;line-height:7px;color:#404040;">1.278.424</div>
<div class="a t" style="left:576.80px;width:300px;text-align:right;top:204.97px;font-size:7px;line-height:7px;color:#404040;">1.283.328</div>
<div class="a t" style="left:606.80px;width:300px;text-align:right;top:204.97px;font-size:7px;line-height:7px;color:#404040;">0.4</div>
<div class="a t" style="left:663.80px;width:300px;text-align:right;top:204.97px;font-size:7px;line-height:7px;color:#404040;">300.000</div>
<div class="a t" style="left:698.80px;width:300px;text-align:right;top:204.97px;font-size:7px;line-height:7px;color:#404040;">0.2</div>
<div class="a t" style="left:152.50px;top:217.47px;font-size:7px;line-height:7px;color:#404040;letter-spacing:0.15px">TOTAL</div>
<div class="a t" style="left:-53.20px;width:300px;text-align:right;top:217.47px;font-size:7px;line-height:7px;color:#404040;font-weight:bold;">197.500.344</div>
<div class="a t" style="left:-2.20px;width:300px;text-align:right;top:217.47px;font-size:7px;line-height:7px;color:#404040;font-weight:bold;">210.201.541</div>
<div class="a t" style="left:29.80px;width:300px;text-align:right;top:217.47px;font-size:7px;line-height:7px;color:#404040;font-weight:bold;">6,4</div>
<div class="a t" style="left:137.80px;width:300px;text-align:right;top:217.47px;font-size:7px;line-height:7px;color:#404040;font-weight:bold;">57.232.210</div>
<div class="a t" style="left:185.80px;width:300px;text-align:right;top:217.47px;font-size:7px;line-height:7px;color:#404040;font-weight:bold;">56.834.802</div>
<div class="a t" style="left:215.80px;width:300px;text-align:right;top:217.47px;font-size:7px;line-height:7px;color:#404040;font-weight:bold;">29,0</div>
<div class="a t" style="left:246.80px;width:300px;text-align:right;top:217.47px;font-size:7px;line-height:7px;color:#404040;font-weight:bold;">27,1</div>
<div class="a t" style="left:276.80px;width:300px;text-align:right;top:217.47px;font-size:7px;line-height:7px;color:#404040;font-weight:bold;">-1,9</div>
<div class="a t" style="left:327.80px;width:300px;text-align:right;top:217.47px;font-size:7px;line-height:7px;color:#404040;font-weight:bold;">120.021.137</div>
<div class="a t" style="left:380.80px;width:300px;text-align:right;top:217.47px;font-size:7px;line-height:7px;color:#404040;font-weight:bold;">131.943.696</div>
<div class="a t" style="left:409.80px;width:300px;text-align:right;top:217.47px;font-size:7px;line-height:7px;color:#404040;font-weight:bold;">60,8</div>
<div class="a t" style="left:439.80px;width:300px;text-align:right;top:217.47px;font-size:7px;line-height:7px;color:#404040;font-weight:bold;">62,8</div>
<div class="a t" style="left:469.80px;width:300px;text-align:right;top:217.47px;font-size:7px;line-height:7px;color:#404040;font-weight:bold;">2,0</div>
<div class="a t" style="left:526.80px;width:300px;text-align:right;top:217.47px;font-size:7px;line-height:7px;color:#404040;font-weight:bold;">119.011.783</div>
<div class="a t" style="left:576.80px;width:300px;text-align:right;top:217.47px;font-size:7px;line-height:7px;color:#404040;font-weight:bold;">90.329.104</div>
<div class="a t" style="left:606.80px;width:300px;text-align:right;top:217.47px;font-size:7px;line-height:7px;color:#2f9a46;font-weight:bold;">-24,1</div>
<div class="a t" style="left:663.80px;width:300px;text-align:right;top:217.47px;font-size:7px;line-height:7px;color:#404040;font-weight:bold;">238.353.663</div>
<div class="a t" style="left:698.80px;width:300px;text-align:right;top:217.47px;font-size:7px;line-height:7px;color:#404040;font-weight:bold;">2,0</div>
<div class="a t" style="left:18.80px;top:301.85px;font-size:11.4px;line-height:11.4px;color:#4a4a4a;">Save actual values to Scenario</div>
<div class="a" style="left:19px;top:312.5px;width:180.5px;height:1.0px;background:#7a7a7a"></div>
<div class="a t" style="left:18.80px;top:475.95px;font-size:11.4px;line-height:11.4px;color:#4a4a4a;">Load values from Scenario</div>
<div class="a" style="left:19px;top:489.5px;width:174.5px;height:1.0px;background:#7a7a7a"></div>
<div class="a" style="left:17px;top:327px;width:181px;height:23px;background:#f0f0f0;border:1px solid #5a5a5a"></div>
<div class="a" style="left:74px;top:327px;width:1px;height:23px;background:#5a5a5a"></div>
<div class="a" style="left:110.5px;top:327px;width:1.0px;height:23px;background:#5a5a5a"></div>
<div class="a t" style="left:-103.70px;width:300px;text-align:center;top:335.41px;font-size:7.2px;line-height:7.2px;color:#595959;">Scenario</div>
<div class="a" style="left:75px;top:330.8px;width:36px;text-align:center;font-size:7.2px;line-height:8.4px;color:#595959">already<br>in use</div>
<div class="a t" style="left:4.50px;width:300px;text-align:center;top:335.41px;font-size:7.2px;line-height:7.2px;color:#595959;">comment</div>
<div class="a" style="left:111px;top:350px;width:87px;height:67.89999999999998px;background:#ebf1de"></div>
<div class="a" style="left:17px;top:361.8px;width:181px;height:1.0px;background:#dadada"></div>
<div class="a t" style="left:20.10px;top:353.12px;font-size:7.3px;line-height:7.3px;color:#404040;">Planing Version</div>
<svg class="a" style="left:88px;top:351.85px" width="10" height="10" viewBox="0 0 10 10"><rect x="0.6" y="0.6" width="8.8" height="8.8" rx="0.8" fill="#fff" stroke="#ababab" stroke-width="1.2"/><path d="M2.2 5.2 L4.2 7.3 L8 2.6" fill="none" stroke="#111" stroke-width="1.3"/></svg>
<div class="a" style="left:17px;top:378.7px;width:181px;height:1.0px;background:#dadada"></div>
<div class="a t" style="left:20.10px;top:367.72px;font-size:7.3px;line-height:7.3px;color:#404040;">Best Case</div>
<svg class="a" style="left:88px;top:366.45px" width="10" height="10" viewBox="0 0 10 10"><rect x="0.6" y="0.6" width="8.8" height="8.8" rx="0.8" fill="#fff" stroke="#ababab" stroke-width="1.2"/><path d="M2.2 5.2 L4.2 7.3 L8 2.6" fill="none" stroke="#111" stroke-width="1.3"/></svg>
<div class="a" style="left:17px;top:391.8px;width:181px;height:1.0px;background:#dadada"></div>
<div class="a t" style="left:20.10px;top:383.12px;font-size:7.3px;line-height:7.3px;color:#404040;">Realistic Case</div>
<svg class="a" style="left:88px;top:381.45px" width="10" height="10" viewBox="0 0 10 10"><rect x="0.6" y="0.6" width="8.8" height="8.8" rx="0.8" fill="#fff" stroke="#ababab" stroke-width="1.2"/><path d="M2.2 5.2 L4.2 7.3 L8 2.6" fill="none" stroke="#111" stroke-width="1.3"/></svg>
<div class="a" style="left:17px;top:404.3px;width:181px;height:1.0px;background:#dadada"></div>
<div class="a t" style="left:20.10px;top:395.72px;font-size:7.3px;line-height:7.3px;color:#404040;">Worst Case</div>
<svg class="a" style="left:88px;top:394.25px" width="10" height="10" viewBox="0 0 10 10"><rect x="0.6" y="0.6" width="8.8" height="8.8" rx="0.8" fill="#fff" stroke="#ababab" stroke-width="1.2"/><path d="M2.2 5.2 L4.2 7.3 L8 2.6" fill="none" stroke="#111" stroke-width="1.3"/></svg>
<div class="a" style="left:17px;top:417.4px;width:181px;height:1.0px;background:#dadada"></div>
<div class="a t" style="left:20.10px;top:408.72px;font-size:7.3px;line-height:7.3px;color:#404040;">Final Version</div>
<svg class="a" style="left:88px;top:407.05px" width="10" height="10" viewBox="0 0 10 10"><rect x="0.6" y="0.6" width="8.8" height="8.8" rx="0.8" fill="#fff" stroke="#ababab" stroke-width="1.2"/><path d="M2.2 5.2 L4.2 7.3 L8 2.6" fill="none" stroke="#111" stroke-width="1.3"/></svg>
<div class="a" style="left:17px;top:434.9px;width:181px;height:1.0px;background:#dadada"></div>
<div class="a t" style="left:20.10px;top:423.92px;font-size:7.3px;line-height:7.3px;color:#404040;font-weight:bold;color:#222;">Target for BU</div>
<svg class="a" style="left:88px;top:422.35px" width="10" height="10" viewBox="0 0 10 10"><rect x="0.6" y="0.6" width="8.8" height="8.8" rx="0.8" fill="#fff" stroke="#ababab" stroke-width="1.2"/><path d="M2.2 5.2 L4.2 7.3 L8 2.6" fill="none" stroke="#111" stroke-width="1.3"/></svg>
<div class="a t" style="left:114.70px;top:352.32px;font-size:7.3px;line-height:7.3px;color:#404040;letter-spacing:0.3px">ongoing</div>
<div class="a t" style="left:114.70px;top:364.12px;font-size:7.3px;line-height:7.3px;color:#404040;letter-spacing:0.25px">Bankruptcy of one of</div>
<div class="a t" style="left:114.70px;top:371.92px;font-size:7.3px;line-height:7.3px;color:#404040;letter-spacing:0.2px">the main competitors</div>
<div class="a t" style="left:114.70px;top:419.47px;font-size:7px;line-height:7px;color:#222;font-weight:bold;letter-spacing:-0.1px">Used to initialize the BU</div>
<div class="a t" style="left:114.70px;top:427.07px;font-size:7px;line-height:7px;color:#222;font-weight:bold;letter-spacing:-0.1px">planning process</div>
<div class="a" style="left:209px;top:308px;width:800px;height:185px;border:1px solid #9a9a9a;border-top:1px solid #c8c8c8"></div>
<div class="a" style="left:342px;top:295px;width:136px;height:14px;background:#f0f0f0;border:1px solid #8a8a8a;border-bottom:1px solid #bbb"></div>
<div class="a t" style="left:260.00px;width:300px;text-align:center;top:299.30px;font-size:6.5px;line-height:6.5px;color:#333;">Portfolios: Purchase Group - Target Group</div>
<div class="a" style="left:478px;top:295px;width:84px;height:14px;background:#f0f0f0;border:1px solid #8a8a8a;border-bottom:1px solid #bbb"></div>
<div class="a t" style="left:370.00px;width:300px;text-align:center;top:299.30px;font-size:6.5px;line-height:6.5px;color:#333;">Net Sales Development</div>
<div class="a" style="left:562px;top:295px;width:73px;height:14px;background:#f0f0f0;border:1px solid #8a8a8a;border-bottom:1px solid #bbb"></div>
<div class="a t" style="left:448.50px;width:300px;text-align:center;top:299.30px;font-size:6.5px;line-height:6.5px;color:#333;">Stock Development</div>
<div class="a" style="left:209px;top:293px;width:133px;height:16px;background:#fff;border:1px solid #8a8a8a;border-bottom:none"></div>
<div class="a t" style="left:125.50px;width:300px;text-align:center;top:296.88px;font-size:6.4px;line-height:6.4px;color:#333;">Overview: Purchse Group - Target Group</div>
<div class="a t" style="left:216.70px;top:317.07px;font-size:11.5px;line-height:11.5px;color:#333;">Women</div>
<div class="a" style="left:215.5px;top:330.4px;width:130.5px;height:155.60000000000002px;background:#d9efc4"></div>
<div class="a t" style="left:218.90px;top:335.41px;font-size:7.2px;line-height:7.2px;color:#2f4a24;">City</div>
<div class="a" style="left:348px;top:330.4px;width:108.5px;height:155.60000000000002px;background:#d9efc4"></div>
<div class="a t" style="left:351.40px;top:335.41px;font-size:7.2px;line-height:7.2px;color:#2f4a24;">Natural</div>
<div class="a" style="left:458.5px;top:330.4px;width:103.0px;height:155.60000000000002px;background:#92d050"></div>
<div class="a t" style="left:461.90px;top:335.41px;font-size:7.2px;line-height:7.2px;color:#2f4a24;">Urban</div>
<div class="a t" style="left:566.30px;top:317.07px;font-size:11.5px;line-height:11.5px;color:#333;">Sport</div>
<div class="a" style="left:565.5px;top:330.4px;width:143.0px;height:87.60000000000002px;background:#9dd465"></div>
<div class="a t" style="left:568.90px;top:335.41px;font-size:7.2px;line-height:7.2px;color:#2f4a24;">Lifestyle</div>
<div class="a" style="left:565.5px;top:420px;width:143.0px;height:65.80000000000001px;background:#9dd465"></div>
<div class="a t" style="left:568.90px;top:425.01px;font-size:7.2px;line-height:7.2px;color:#2f4a24;">Active</div>
<div class="a t" style="left:713.00px;top:317.07px;font-size:11.5px;line-height:11.5px;color:#333;">Men</div>
<div class="a" style="left:712.3px;top:330.4px;width:63.200000000000045px;height:118.10000000000002px;background:#d9efc4"></div>
<div class="a t" style="left:715.70px;top:335.41px;font-size:7.2px;line-height:7.2px;color:#2f4a24;">City</div>
<div class="a" style="left:777px;top:330.4px;width:61.60000000000002px;height:118.10000000000002px;background:#d9efc4"></div>
<div class="a t" style="left:780.40px;top:335.41px;font-size:7.2px;line-height:7.2px;color:#2f4a24;">Natural</div>
<div class="a" style="left:712.3px;top:450.2px;width:126.30000000000007px;height:35.60000000000002px;background:#d9efc4"></div>
<div class="a t" style="left:715.70px;top:455.21px;font-size:7.2px;line-height:7.2px;color:#2f4a24;">Urban</div>
<div class="a t" style="left:844.20px;top:317.07px;font-size:11.5px;line-height:11.5px;color:#333;">Kids</div>
<div class="a" style="left:843px;top:330.4px;width:69.60000000000002px;height:66.60000000000002px;background:#f2d3d3"></div>
<div class="a t" style="left:846.40px;top:335.41px;font-size:7.2px;line-height:7.2px;color:#333;">Kids</div>
<div class="a" style="left:913.8px;top:330.4px;width:67.70000000000005px;height:66.60000000000002px;background:#f2d3d3"></div>
<div class="a t" style="left:917.20px;top:335.41px;font-size:7.2px;line-height:7.2px;color:#333;">Twens</div>
<div class="a" style="left:983px;top:330.4px;width:19.299999999999955px;height:66.60000000000002px;background:#f2d3d3"></div>
<div class="a t" style="left:986.40px;top:335.41px;font-size:7.2px;line-height:7.2px;color:#333;">Baby</div>
<div class="a t" style="left:844.20px;top:404.07px;font-size:11.5px;line-height:11.5px;color:#333;">Divers</div>
<div class="a" style="left:843px;top:416.7px;width:41.799999999999955px;height:69.10000000000002px;background:#f2f1ec"></div>
<div class="a t" style="left:846.40px;top:421.71px;font-size:7.2px;line-height:7.2px;color:#333;">Men</div>
<div class="a" style="left:886.5px;top:416.7px;width:36.200000000000045px;height:69.10000000000002px;background:#f2f1ec"></div>
<div class="a t" style="left:889.90px;top:421.71px;font-size:7.2px;line-height:7.2px;color:#333;">Women</div>
<div class="a" style="left:924.6px;top:416.7px;width:34.39999999999998px;height:69.10000000000002px;background:#f2f1ec"></div>
<div class="a t" style="left:928.00px;top:421.71px;font-size:7.2px;line-height:7.2px;color:#333;">Kids</div>
<div class="a t" style="left:964.00px;top:404.07px;font-size:11.5px;line-height:11.5px;color:#333;">Bags</div>
<div class="a" style="left:963px;top:416.7px;width:39.299999999999955px;height:47.69999999999999px;background:#f4f3ef"></div>
<div class="a t" style="left:966.40px;top:421.71px;font-size:7.2px;line-height:7.2px;color:#333;">Bags</div>
<div class="a" style="left:963px;top:465.4px;width:35.60000000000002px;height:16.600000000000023px;background:#f4f3ef"></div>
<div class="a t" style="left:966.40px;top:470.41px;font-size:7.2px;line-height:7.2px;color:#333;">Accesso...</div>
<div class="a" style="left:999.6px;top:465.4px;width:2.699999999999932px;height:16.600000000000023px;background:#f4f3ef"></div>
</body></html>
